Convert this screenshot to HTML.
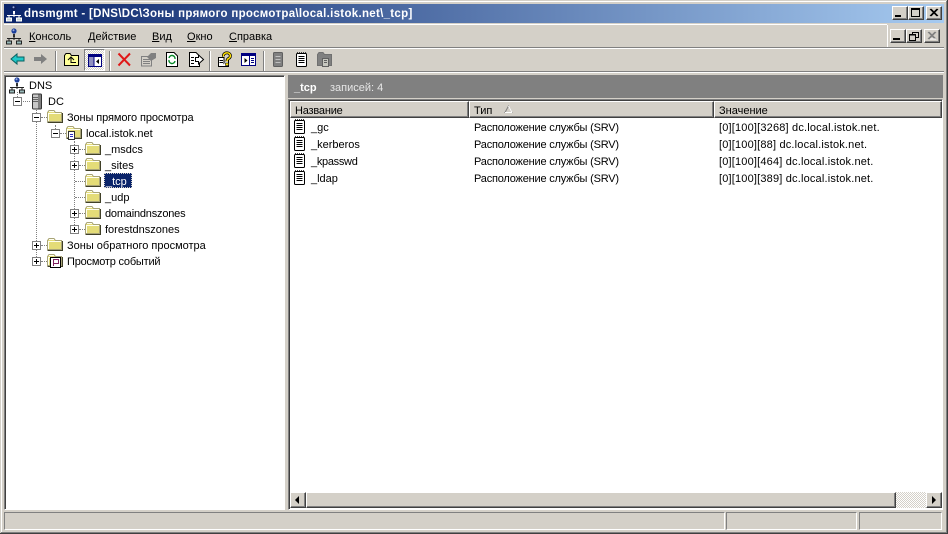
<!DOCTYPE html>
<html><head><meta charset="utf-8"><style>
html,body{margin:0;padding:0;width:948px;height:534px;overflow:hidden;background:#d4d0c8}
body{font:11px "Liberation Sans","Noto Sans CJK JP",sans-serif;color:#000;position:relative}
.a{position:absolute}
.t{position:absolute;white-space:nowrap;line-height:13px;height:13px;margin-top:1px}
.r{position:absolute;box-sizing:border-box}
svg{position:absolute;overflow:visible}
u{text-decoration:underline}
.box{position:absolute;width:9px;height:9px;box-sizing:border-box;border:1px solid #808080;background:#fff}
.box:before{content:"";position:absolute;left:1px;top:3px;width:5px;height:1px;background:#000}
.plus:after{content:"";position:absolute;left:3px;top:1px;width:1px;height:5px;background:#000}
.dv{position:absolute;width:0;border-left:1px dotted #808080}
.dh{position:absolute;height:0;border-top:1px dotted #808080}
.btn{position:absolute;box-sizing:border-box;background:#d4d0c8;border:1px solid;border-color:#fff #404040 #404040 #fff;box-shadow:inset -1px -1px 0 #808080}
.sep{position:absolute;width:1px;height:20px;top:50px;background:#808080;border-right:1px solid #fff}
.sb{position:absolute;box-sizing:border-box;border:1px solid;border-color:#808080 #fff #fff #808080;top:512px;height:18px}
.hd{position:absolute;top:101px;height:17px;box-sizing:border-box;background:#d4d0c8;border:1px solid;border-color:#fff #404040 #404040 #fff;box-shadow:inset -1px -1px 0 #808080}
.srv{letter-spacing:-.2px}.val{letter-spacing:.18px}
</style></head><body>
<svg width="0" height="0" style="position:absolute"><defs>
<g id="folder"><path d="M1.5 3.5 L3 1.5 H8 L9.5 3.5 H15.5 V12.5 H1.5 Z" fill="#e4dc78" stroke="#a8a478"/><rect x="2" y="4" width="13" height="1" fill="#fffff0"/><rect x="2" y="4" width="1" height="8" fill="#fffff0"/><path d="M1.5 13.5H16.5V4" fill="none" stroke="#404028"/><path d="M8 2.5H3" stroke="#fffff0"/></g>
<g id="doc"><rect x="1.5" y="2.5" width="10" height="13" rx="1" fill="#fff" stroke="#000"/><path d="M2 1.5h9" stroke="#404040" stroke-dasharray="1 1"/><path d="M3.5 5.5h6M3.5 7.5h6M3.5 9.5h6M3.5 11.5h6" stroke="#000"/></g>
<g id="net"><circle cx="8" cy="3" r="2.6" fill="#1c3f9c"/><circle cx="7.5" cy="2.2" r="1" fill="#9ad"/><rect x="7" y="6" width="2" height="3" fill="#333"/><path d="M1 10.5H15" stroke="#222"/><path d="M3 10v3M13 10v3M8 8v4" stroke="#222"/><rect x="0.5" y="13" width="5" height="3" fill="#9bb" stroke="#222"/><rect x="10.5" y="13" width="5" height="3" fill="#9bb" stroke="#222"/></g>
<g id="netw"><circle cx="8" cy="3" r="2.6" fill="#10205c"/><circle cx="7.5" cy="2.2" r="1" fill="#9ad"/><rect x="7" y="6" width="2" height="3" fill="#fff"/><path d="M1 10.5H15" stroke="#fff"/><path d="M3 10v3M13 10v3M8 8v4" stroke="#fff"/><rect x="0.5" y="13" width="5" height="3" fill="#c8d4d4" stroke="#fff"/><rect x="10.5" y="13" width="5" height="3" fill="#c8d4d4" stroke="#fff"/></g>
</defs></svg>

<!-- window frame -->
<div class="a" style="left:0;top:0;width:948px;height:1px;background:#d4d0c8"></div>
<div class="a" style="left:1px;top:1px;width:946px;height:1px;background:#fff"></div>
<div class="a" style="left:1px;top:1px;width:1px;height:532px;background:#fff"></div>
<div class="a" style="left:946px;top:1px;width:1px;height:532px;background:#808080"></div>
<div class="a" style="left:947px;top:0;width:1px;height:534px;background:#404040"></div>
<div class="a" style="left:1px;top:532px;width:946px;height:1px;background:#808080"></div>
<div class="a" style="left:0;top:533px;width:948px;height:1px;background:#404040"></div>

<!-- title bar -->
<div class="a" style="left:4px;top:4px;width:940px;height:19px;background:linear-gradient(90deg,#0a246a 0%,#a6caf0 100%)"></div>
<svg style="left:6px;top:5px" width="17" height="17"><use href="#netw"/></svg>
<div class="t" style="left:24px;top:7px;color:#fff;font-weight:bold;font-size:11.5px;letter-spacing:.3px">dnsmgmt - [DNS\DC\Зоны прямого просмотра\local.istok.net\_tcp]</div>
<div class="btn" style="left:892px;top:6px;width:16px;height:14px"></div><div class="a" style="left:895px;top:15px;width:6px;height:2px;background:#000"></div>
<div class="btn" style="left:908px;top:6px;width:16px;height:14px"></div><div class="a" style="left:911px;top:8px;width:9px;height:9px;box-sizing:border-box;border:1px solid #000;border-top-width:2px"></div>
<div class="btn" style="left:926px;top:6px;width:16px;height:14px"></div>
<svg style="left:926px;top:6px" width="16" height="14"><path d="M4 3L11 10M5 3L12 10M11 3L4 10M12 3L5 10" stroke="#000" fill="none"/></svg>

<!-- menu bar -->
<div class="a" style="left:4px;top:23px;width:940px;height:1px;background:#d4d0c8"></div>
<div class="a" style="left:4px;top:24px;width:883px;height:1px;background:#fff"></div>
<div class="a" style="left:4px;top:47px;width:940px;height:1px;background:#808080"></div>
<div class="a" style="left:4px;top:48px;width:940px;height:1px;background:#fff"></div>
<svg style="left:6px;top:28px" width="17" height="17"><use href="#net"/></svg>
<div class="t" style="left:29px;top:30px"><u>К</u>онсоль</div>
<div class="t" style="left:88px;top:30px"><u>Д</u>ействие</div>
<div class="t" style="left:152px;top:30px"><u>В</u>ид</div>
<div class="t" style="left:187px;top:30px"><u>О</u>кно</div>
<div class="t" style="left:229px;top:30px"><u>С</u>правка</div>
<div class="a" style="left:887px;top:25px;width:1px;height:22px;background:#fff"></div>
<div class="btn" style="left:890px;top:29px;width:16px;height:14px"></div><div class="a" style="left:893px;top:38px;width:7px;height:2px;background:#000"></div>
<div class="btn" style="left:906px;top:29px;width:16px;height:14px"></div>
<svg style="left:906px;top:29px" width="16" height="14"><path d="M6.5 3.5H12.5V8.5H10M6.5 3.5V5" fill="none" stroke="#000"/><rect x="3.5" y="5.5" width="6" height="6" fill="none" stroke="#000"/><path d="M3 6H10M6 3.5H13" stroke="#000"/></svg>
<div class="btn" style="left:924px;top:29px;width:16px;height:14px"></div>
<svg style="left:924px;top:29px" width="16" height="14"><path d="M4 3L11 10M5 3L12 10M11 3L4 10M12 3L5 10" stroke="#808080" fill="none"/><path d="M6 10L12 10" stroke="#fff"/></svg>

<!-- toolbar -->
<div class="a" style="left:4px;top:71px;width:940px;height:1px;background:#808080"></div>
<div class="a" style="left:4px;top:72px;width:940px;height:1px;background:#fff"></div>
<svg style="left:10px;top:52px" width="16" height="14"><path d="M1 7L7 2V5H14V9H7V12Z" fill="#20c8c8" stroke="#086060"/></svg>
<svg style="left:33px;top:52px" width="16" height="14"><path d="M14 7L8 2V5H1V9H8V12Z" fill="#808080"/></svg>
<div class="sep" style="top:51px;left:55px"></div>
<svg style="left:63px;top:52px" width="17" height="15"><path d="M1.5 3.5L3 1.5H7L8.5 3.5H15.5V13.5H1.5Z" fill="#ffff99" stroke="#000"/><path d="M5 8L8 5L11 8M8 5.5V10.5H13" fill="none" stroke="#000"/></svg>
<div class="a" style="left:84px;top:49px;width:21px;height:22px;box-sizing:border-box;border:1px solid;border-color:#808080 #fff #fff #808080;background:repeating-conic-gradient(#fff 0 25%,#d4d0c8 0 50%) 0 0/2px 2px"></div>
<svg style="left:88px;top:54px" width="14" height="13"><rect x="0.5" y="0.5" width="13" height="12" fill="#fff" stroke="#000080"/><rect x="1" y="1" width="12" height="2" fill="#000080"/><rect x="1" y="3" width="5" height="9" fill="#9090c0"/><path d="M6 3v9" stroke="#000080"/><path d="M11 5L8 7.5L11 10Z" fill="#000"/></svg>
<div class="sep" style="top:51px;left:109px"></div>
<svg style="left:117px;top:52px" width="15" height="15"><path d="M1.5 1.5L13 13.5M13 1.5L1.5 13.5" stroke="#e01818" stroke-width="2" fill="none"/></svg>
<svg style="left:140px;top:52px" width="17" height="15"><rect x="1.5" y="4.5" width="10" height="9.5" fill="#d4d0c8" stroke="#808080"/><path d="M3 7.5h7M3 9.5h7M3 11.5h7" stroke="#808080"/><path d="M7 5L11 1H16V6L11 9Z" fill="#808080"/></svg>
<svg style="left:165px;top:52px" width="14" height="15"><path d="M1.5 .5H9L12.5 4V14.5H1.5Z" fill="#fff" stroke="#000"/><path d="M4 6A3 3 0 0 1 10 7M10 9A3 3 0 0 1 4 8" fill="none" stroke="#0a8a2a" stroke-width="1.4"/></svg>
<svg style="left:188px;top:52px" width="16" height="15"><path d="M1.5 .5H8L11.5 4V14.5H1.5Z" fill="#fff" stroke="#000"/><path d="M3 5.5H6M3 8.5H6M3 11.5H6" stroke="#000"/><path d="M7.5 5.5H10.5V3L15.5 7.5L10.5 12V9.5H7.5Z" fill="#fff" stroke="#000"/></svg>
<div class="sep" style="top:51px;left:209px"></div>
<svg style="left:217px;top:52px" width="16" height="15"><path d="M1.5 5.5H7V14.5H1.5Z" fill="#fff" stroke="#000"/><path d="M5 14.5H11.5V6" fill="#fff" stroke="#000"/><path d="M2.5 8.5H6M2.5 10.5H6" stroke="#000"/><path d="M6.5 4.5A3.5 3 0 1 1 11.5 6.5Q10 7.5 10 9.5" fill="none" stroke="#000" stroke-width="3"/><path d="M6.5 4.5A3.5 3 0 1 1 11.5 6.5Q10 7.5 10 9.5" fill="none" stroke="#ffe000" stroke-width="1.5"/><rect x="8.5" y="11" width="3" height="2.5" fill="#ffe000" stroke="#000" stroke-width=".6"/></svg>
<svg style="left:241px;top:53px" width="15" height="13"><rect x="0.5" y="0.5" width="14" height="12" fill="#fff" stroke="#000080"/><rect x="1" y="1" width="13" height="2" fill="#000080"/><path d="M8.5 3v9" stroke="#000080"/><path d="M3.5 5L6.5 7.5L3.5 10Z" fill="#000"/><path d="M10 5.5h3M10 7.5h3M10 9.5h3" stroke="#000080"/></svg>
<div class="sep" style="top:51px;left:263px"></div>
<svg style="left:273px;top:52px" width="11" height="15"><rect x="0.5" y="0.5" width="9" height="14" rx="1" fill="#808080" stroke="#606060"/><path d="M2.5 4.5H7.5M2.5 7.5H7.5M2.5 10.5H7.5" stroke="#c0c0c0"/></svg>
<svg style="left:295px;top:51px" width="14" height="17"><use href="#doc"/></svg>
<svg style="left:317px;top:52px" width="16" height="15"><path d="M0.5 2.5L2 .5H6L7.5 2.5H14.5V13.5H0.5Z" fill="#808080" stroke="#707070"/><rect x="5.5" y="6.5" width="6" height="8" fill="#c8c8c0" stroke="#606060"/><path d="M7 8.5h3M7 10.5h3" stroke="#606060"/></svg>

<!-- left pane -->
<div class="r" style="left:4px;top:75px;width:281px;height:435px;background:#fff;border:1px solid;border-color:#808080 #fff #fff #808080;box-shadow:inset 1px 1px 0 #404040"></div>
<div class="dh" style="left:18px;top:101px;width:12px"></div>
<div class="dv" style="left:17px;top:92px;height:5px"></div>
<svg style="left:9px;top:77px" width="17" height="17"><use href="#net"/></svg>
<div class="t" style="left:29px;top:79px">DNS</div>
<div class="box" style="left:13px;top:97px"></div>
<svg style="left:30px;top:93px" width="14" height="17"><rect x="2.5" y="1" width="9" height="15" rx="1" fill="#c8c8c8" stroke="#333"/><rect x="8" y="1.5" width="3" height="14" fill="#808080"/><path d="M3 4.5H8M3 6.5H8M3 8.5H8" stroke="#666"/></svg>
<div class="t" style="left:48px;top:95px">DC</div>

<div class="dv" style="left:36px;top:108px;height:149px"></div>
<div class="dh" style="left:41px;top:117px;width:6px"></div>
<div class="box" style="left:32px;top:113px"></div>
<svg style="left:46px;top:109px" width="18" height="15"><use href="#folder"/></svg>
<div class="t" style="left:67px;top:111px;letter-spacing:-.1px">Зоны прямого просмотра</div>

<div class="dv" style="left:55px;top:125px;height:4px"></div>
<div class="dh" style="left:60px;top:133px;width:6px"></div>
<div class="box" style="left:51px;top:129px"></div>
<svg style="left:65px;top:125px" width="18" height="17"><use href="#folder"/><rect x="3.5" y="6.5" width="6" height="8" fill="#fff" stroke="#333"/><path d="M5 9.5h3M5 11.5h3" stroke="#3030c0"/></svg>
<div class="t" style="left:86px;top:127px">local.istok.net</div>

<div class="dv" style="left:74px;top:141px;height:84px"></div>
<div class="dh" style="left:79px;top:149px;width:6px"></div><div class="dh" style="left:79px;top:165px;width:6px"></div>
<div class="dh" style="left:75px;top:181px;width:10px"></div><div class="dh" style="left:75px;top:197px;width:10px"></div>
<div class="dh" style="left:79px;top:213px;width:6px"></div><div class="dh" style="left:79px;top:229px;width:6px"></div>
<div class="box plus" style="left:70px;top:145px"></div>
<div class="box plus" style="left:70px;top:161px"></div>
<div class="box plus" style="left:70px;top:209px"></div>
<div class="box plus" style="left:70px;top:225px"></div>
<svg style="left:84px;top:141px" width="18" height="15"><use href="#folder"/></svg>
<svg style="left:84px;top:157px" width="18" height="15"><use href="#folder"/></svg>
<svg style="left:84px;top:173px" width="18" height="15"><use href="#folder"/></svg>
<svg style="left:84px;top:189px" width="18" height="15"><use href="#folder"/></svg>
<svg style="left:84px;top:205px" width="18" height="15"><use href="#folder"/></svg>
<svg style="left:84px;top:221px" width="18" height="15"><use href="#folder"/></svg>
<div class="t" style="left:105px;top:143px">_msdcs</div>
<div class="t" style="left:105px;top:159px">_sites</div>
<div class="a" style="left:104px;top:173px;width:28px;height:15px;background:#0a246a;outline:1px dotted #d4d0c8;outline-offset:-1px"></div>
<div class="t" style="left:106px;top:175px;color:#fff">_tcp</div>
<div class="t" style="left:105px;top:191px">_udp</div>
<div class="t" style="left:105px;top:207px;letter-spacing:-.2px">domaindnszones</div>
<div class="t" style="left:105px;top:223px">forestdnszones</div>

<div class="dh" style="left:41px;top:245px;width:6px"></div><div class="dh" style="left:41px;top:261px;width:6px"></div>
<div class="box plus" style="left:32px;top:241px"></div>
<div class="box plus" style="left:32px;top:257px"></div>
<svg style="left:46px;top:237px" width="18" height="15"><use href="#folder"/></svg>
<svg style="left:46px;top:253px" width="18" height="16"><use href="#folder"/><rect x="4.5" y="4.5" width="10" height="10" fill="#fff" stroke="#000"/><path d="M7.5 6.5H12.5V10.5H7.5ZM7.5 6V13" fill="none" stroke="#802060"/></svg>
<div class="t" style="left:67px;top:239px">Зоны обратного просмотра</div>
<div class="t" style="left:67px;top:255px;letter-spacing:-.2px">Просмотр событий</div>

<!-- right header -->
<div class="a" style="left:288px;top:75px;width:655px;height:23px;background:#808080"></div>
<div class="t" style="left:294px;top:81px;color:#fff;font-weight:bold">_tcp</div>
<div class="t" style="left:330px;top:81px;color:#e6e6e6;font-size:11px">записей: 4</div>

<!-- list -->
<div class="r" style="left:288px;top:99px;width:655px;height:411px;background:#fff;border:1px solid;border-color:#808080 #fff #fff #808080;box-shadow:inset 1px 1px 0 #404040"></div>
<div class="hd" style="left:290px;width:179px"></div>
<div class="hd" style="left:469px;width:245px"></div>
<div class="hd" style="left:714px;width:228px"></div>
<div class="t" style="left:295px;top:104px;letter-spacing:-.2px">Название</div>
<div class="t" style="left:474px;top:104px">Тип</div>
<svg style="left:504px;top:105px" width="10" height="9"><path d="M4.5 1L1 7.5H8Z" fill="none" stroke="#808080"/><path d="M1 7.5H8M4.5 1L8 7.5" fill="none" stroke="#fff"/></svg>
<div class="t" style="left:719px;top:104px">Значение</div>

<svg style="left:293px;top:118px" width="14" height="17"><use href="#doc"/></svg>
<svg style="left:293px;top:135px" width="14" height="17"><use href="#doc"/></svg>
<svg style="left:293px;top:152px" width="14" height="17"><use href="#doc"/></svg>
<svg style="left:293px;top:169px" width="14" height="17"><use href="#doc"/></svg>
<div class="t" style="left:311px;top:121px">_gc</div>
<div class="t" style="left:311px;top:138px">_kerberos</div>
<div class="t" style="left:311px;top:155px;letter-spacing:-.3px">_kpasswd</div>
<div class="t" style="left:311px;top:172px">_ldap</div>
<div class="t srv" style="left:474px;top:121px">Расположение службы (SRV)</div>
<div class="t srv" style="left:474px;top:138px">Расположение службы (SRV)</div>
<div class="t srv" style="left:474px;top:155px">Расположение службы (SRV)</div>
<div class="t srv" style="left:474px;top:172px">Расположение службы (SRV)</div>
<div class="t val" style="left:719px;top:121px">[0][100][3268] dc.local.istok.net.</div>
<div class="t val" style="left:719px;top:138px">[0][100][88] dc.local.istok.net.</div>
<div class="t val" style="left:719px;top:155px">[0][100][464] dc.local.istok.net.</div>
<div class="t val" style="left:719px;top:172px">[0][100][389] dc.local.istok.net.</div>

<!-- h scrollbar -->
<div class="a" style="left:290px;top:492px;width:652px;height:16px;background:repeating-conic-gradient(#fff 0 25%,#d4d0c8 0 50%) 0 0/2px 2px"></div>
<div class="btn" style="left:290px;top:492px;width:16px;height:16px"></div>
<svg style="left:290px;top:492px" width="16" height="16"><path d="M9 4V12L5 8Z" fill="#000"/></svg>
<div class="btn" style="left:306px;top:492px;width:590px;height:16px"></div>
<div class="btn" style="left:926px;top:492px;width:16px;height:16px"></div>
<svg style="left:926px;top:492px" width="16" height="16"><path d="M6 4V12L10 8Z" fill="#000"/></svg>

<!-- status bar -->
<div class="sb" style="left:4px;width:721px"></div>
<div class="sb" style="left:726px;width:131px"></div>
<div class="sb" style="left:859px;width:83px"></div>
</body></html>
